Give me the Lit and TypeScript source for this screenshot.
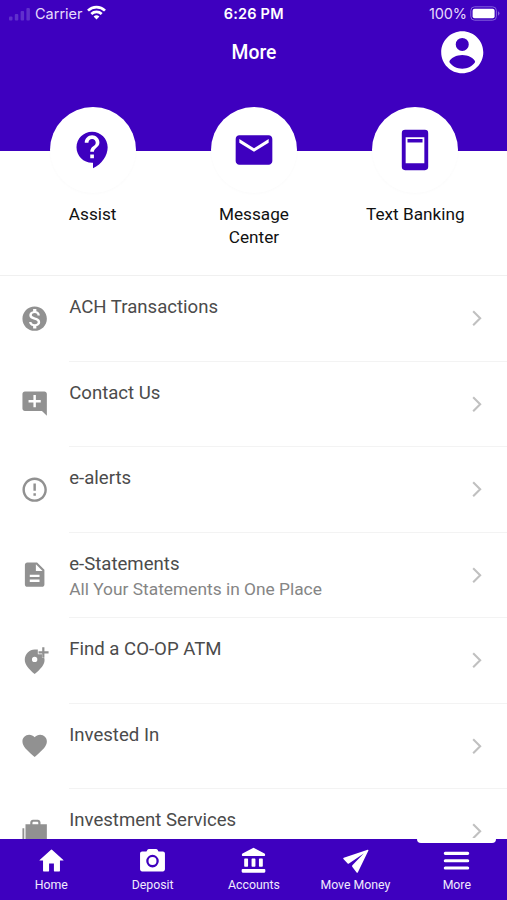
import { LitElement, html, css, svg } from "lit";
import { customElement, property } from "lit/decorators.js";

const icons: Record<string, unknown> = {
  account: svg`<path fill-rule="evenodd" d="M12 2C6.48 2 2 6.48 2 12s4.48 10 10 10 10-4.48 10-10S17.52 2 12 2zM12 5.200a3.100 3.100 0 1 1 0 6.200a3.100 3.100 0 0 1 0-6.200zM12 19.800c-2.500 0-4.900-1.250-6.150-3.200.3-2 3.700-3.350 6.150-3.350s5.850 1.350 6.150 3.350c-1.250 1.950-3.650 3.200-6.150 3.200z"/>`,
  assist: svg`<path d="M11.5 2C6.81 2 3 5.81 3 10.500S6.810 19 11.500 19h.5v3c4.860-2.340 8-7 8-11.500C20 5.810 16.190 2 11.500 2zm1 14.500h-2v-2h2v2zm0-3.500h-2c0-3.250 3-3 3-5 0-1.100-.9-2-2-2s-2 .9-2 2h-2c0-2.210 1.790-4 4-4s4 1.790 4 4c0 2.500-3 2.750-3 5z"/>`,
  mail: svg`<path d="M20 4H4c-1.100 0-1.990.9-1.990 2L2 18c0 1.100.9 2 2 2h16c1.100 0 2-.9 2-2V6c0-1.100-.9-2-2-2zm0 4l-8 5-8-5V6l8 5 8-5v2z"/>`,
  phone: svg`<path fill-rule="evenodd" d="M6.600 1h10.800a1.800 1.800 0 0 1 1.800 1.800v18.400a1.800 1.800 0 0 1-1.800 1.800H6.600a1.800 1.800 0 0 1-1.800-1.800V2.800A1.800 1.800 0 0 1 6.600 1zM6.900 5v14.200h10.200V5z"/><path d="M7.900 6h8.200v1.900H7.900z"/>`,
  money: svg`<path d="M12 2C6.480 2 2 6.480 2 12s4.480 10 10 10 10-4.480 10-10S17.520 2 12 2zm1.410 16.090V20h-2.670v-1.930c-1.710-.36-3.160-1.460-3.270-3.400h1.960c.1 1.050.82 1.870 2.650 1.870 1.960 0 2.400-.98 2.400-1.590 0-.83-.44-1.610-2.670-2.140-2.480-.6-4.180-1.620-4.180-3.670 0-1.720 1.390-2.840 3.110-3.210V4h2.670v1.950c1.860.45 2.790 1.860 2.850 3.390H14.300c-.05-1.110-.64-1.870-2.220-1.870-1.500 0-2.400.68-2.400 1.640 0 .84.65 1.390 2.670 1.910s4.180 1.390 4.180 3.910c-.01 1.830-1.380 2.830-3.120 3.160z"/>`,
  contact: svg`<path d="M22 4c0-1.100-.9-2-2-2H4c-1.100 0-2 .9-2 2v12c0 1.100.9 2 2 2h14l4 4V4zm-5 7h-4v4h-2v-4H7V9h4V5h2v4h4v2z"/>`,
  alert: svg`<path d="M11 15h2v2h-2zm0-8h2v6h-2zm.99-5C6.470 2 2 6.480 2 12s4.470 10 9.990 10C17.520 22 22 17.520 22 12S17.520 2 11.990 2zM12 20c-4.420 0-8-3.580-8-8s3.580-8 8-8 8 3.580 8 8-3.580 8-8 8z"/>`,
  doc: svg`<path d="M14 2H6c-1.100 0-1.990.9-1.990 2L4 20c0 1.100.89 2 1.990 2H18c1.100 0 2-.9 2-2V8l-6-6zm2 16H8v-2h8v2zm0-4H8v-2h8v2zm-3-5V3.500L18.500 9H13z"/>`,
  pin: svg`<path fill-rule="evenodd" d="M14.600 2.800V6.800h3.400v3h1.900q.3 1 .2 2C20.100 15 17 18.800 12 23 7 18.800 3.900 15 3.900 11.300 3.900 6.300 7.800 2.800 12 2.800zM12 8.800a2.200 2.200 0 1 0 0 4.400a2.200 2.200 0 0 0 0-4.400z"/><path d="M18.200 1h1.800v3.400h3.400v1.800H20v3.400h-1.800V6.200h-3V4.400h3z"/>`,
  heart: svg`<path d="M12 21.350l-1.450-1.320C5.400 15.360 2 12.280 2 8.500 2 5.420 4.420 3 7.500 3c1.740 0 3.410.81 4.500 2.090C13.090 3.810 14.760 3 16.500 3 19.580 3 22 5.420 22 8.500c0 3.780-3.400 6.860-8.550 11.540L12 21.350z"/>`,
  bag: svg`<path fill-rule="evenodd" d="M2 9.200h1.500V22h15v1.500H2zM8.400 6V4.500C8.400 3.300 9.400 2.200 10.600 2.200h4c1.200 0 2.200 1.100 2.200 2.300V6H22v14.500H4.500V6zM10.200 6h4.800V4.500l-.6-.6h-3.600l-.6.6z"/>`,
  home: svg`<path d="M10 20.500v-6h4v6q0 .5.5.5H18.500q.5 0 .5-.5V12h2.600q.7 0 .2-.5L12.400 3q-.4-.35-.8 0L2.200 11.500q-.5.5.2.5H5v8.500q0 .5.5.5h4q.5 0 .5-.5z"/>`,
  camera: svg`<path fill-rule="evenodd" d="M9 2.400q-.6 0-1 .5L7 4.500H3.400c-.9 0-1.700.8-1.700 1.700v13.100c0 .9.800 1.700 1.700 1.700h17.200c.9 0 1.700-.8 1.700-1.700V6.200c0-.9-.8-1.700-1.700-1.700H17l-1-1.600q-.4-.5-1-.5zM12 7.300a5.200 5.200 0 1 1 0 10.400a5.200 5.200 0 0 1 0-10.400z"/><circle cx="12" cy="12.500" r="3.300"/>`,
  bank: svg`<path d="M12.400 1.600l8.700 4.600q.5.300.5.900v.6q0 .6-.6.600H3q-.6 0-.6-.6v-.6q0-.6.5-.9l8.700-4.600q.4-.2.800 0zM4.900 10.400h2q.6 0 .6.600v5.500q0 .6-.6.600h-2q-.6 0-.6-.6V11q0-.6.600-.6zM11 10.400h2q.6 0 .6.600v5.500q0 .6-.6.600h-2q-.6 0-.6-.6V11q0-.6.600-.6zM17.100 10.400h2q.6 0 .6.600v5.500q0 .6-.6.600h-2q-.6 0-.6-.6V11q0-.6.6-.6zM3.100 19h17.800q.9 0 .9.900v1.300q0 .9-.9.900H3.100q-.9 0-.9-.9v-1.300q0-.9.900-.9z"/>`,
  send: svg`<path d="M22.100 3.100L2.300 9.700q-.8.400-.3 1.100l3.500 3.700q.5.400 1.100 0L18.800 6.200 9.400 16q-.5.600-.1 1.200l3.600 4.700q.7.600 1.100-.2L22.700 3.700q.1-.7-.6-.6z"/>`,
  menu: svg`<g stroke="currentColor" stroke-width="2.500" stroke-linecap="round"><path d="M2.700 6.100h18.600M2.700 12.200h18.600M2.700 18.200h18.600"/></g>`,
  chevron: svg`<path fill="none" stroke="currentColor" stroke-width="2.500" d="M7.400 3.800l8.400 8.400-8.400 8.400"/>`,
};

@customElement("ui-icon")
class UiIcon extends LitElement {
  @property() name = "";
  static styles = css`
    :host { display: block; flex: none; }
    .glyph { display: block; width: 100%; height: 100%; fill: currentColor; overflow: visible; }
  `;
  render() {
    return html`<svg class="glyph" viewBox="0 0 24 24">${icons[this.name]}</svg>`;
  }
}

const shortcuts = [
  { icon: "assist", label: "Assist" },
  { icon: "mail", label: "Message Center" },
  { icon: "phone", label: "Text Banking" },
];
const rows = [
  { icon: "money", title: "ACH Transactions" },
  { icon: "contact", title: "Contact Us" },
  { icon: "alert", title: "e-alerts" },
  { icon: "doc", title: "e-Statements", note: "All Your Statements in One Place" },
  { icon: "pin", title: "Find a CO-OP ATM" },
  { icon: "heart", title: "Invested In" },
  { icon: "bag", title: "Investment Services" },
];
const tabs = [
  { icon: "home", label: "Home" },
  { icon: "camera", label: "Deposit" },
  { icon: "bank", label: "Accounts" },
  { icon: "send", label: "Move Money" },
  { icon: "menu", label: "More" },
];

@customElement("app-root")
class AppRoot extends LitElement {
  static styles = css`
    :host {
      display: flex; flex-direction: column; height: 900px; overflow: hidden;
      background: #fff; font-family: Roboto, sans-serif; color: #111;
    }
    .header { flex: none; height: 151px; background: #3e00bf; color: #fff; }
    .status {
      display: grid; grid-template-columns: 1fr auto 1fr; align-items: center;
      height: 27px; padding: 0 7px 0 9px; box-sizing: border-box;
      font: 14.5px/27px Inter, sans-serif;
    }
    .carrier, .power { display: flex; align-items: center; color: #e6dafb; }
    .power { justify-content: flex-end; gap: 3px; letter-spacing: -0.1px; }
    .signal { width: 21px; height: 14px; margin-right: 5px; fill: #6030cc; }
    .wifi { width: 19px; height: 15px; margin: 0 0 2px 4.500px; fill: none; stroke: #fff; stroke-width: 2.7; }
    .clock { font-weight: 600; letter-spacing: 0.2px; margin-right: 1.500px; }
    .battery { width: 30px; height: 15px; }
    .bar { display: grid; grid-template-columns: 1fr auto 1fr; align-items: center; height: 50px; padding-right: 20px; }
    .heading { grid-column: 2; margin: 1px 0 0 21px; font-size: 19.300px; font-weight: 500; }
    .avatar { justify-self: end; width: 50.500px; height: 50.500px; }
    .shortcuts {
      flex: none; height: 169px; margin-top: -44px; padding: 0 11px 0 12px; box-sizing: border-box;
      display: grid; grid-template-columns: repeat(3, 1fr); border-bottom: 1px solid #f0f0f0;
    }
    .shortcut { display: flex; flex-direction: column; align-items: center; gap: 10px; }
    .disc {
      width: 86px; height: 86px; border-radius: 50%; background: #fff; color: #3e00bf;
      display: flex; align-items: center; justify-content: center; box-shadow: 0 1px 3px rgba(0,0,0,.02);
    }
    .disc-icon { width: 44px; height: 44px; }
    .caption { width: 110px; text-align: center; font-size: 17.200px; line-height: 22.500px; }
    .list { flex: 1; min-height: 0; overflow: hidden; }
    .row { display: flex; height: 85.500px; padding-left: 20.400px; color: #919191; }
    .row-icon { width: 29.300px; height: 29.300px; align-self: center; margin-bottom: 1px; }
    .body {
      flex: 1; display: flex; align-items: flex-start; margin-left: 19.500px;
      border-bottom: 1px solid #f3f3f3; box-sizing: border-box;
    }
    .text { flex: 1; padding-top: 19px; }
    .title { font-size: 18.600px; line-height: 24px; color: #4b4b4b; }
    .note { font-size: 17.350px; line-height: 26px; margin-top: 0.500px; color: #858585; }
    .chevron { width: 20px; height: 20px; align-self: center; margin-right: 20px; color: #c0c0c0; }
    .tabs {
      position: relative; flex: none; height: 61px; background: #3e00bf; color: #fff;
      display: grid; grid-template-columns: repeat(5, 1fr);
    }
    .tab { display: flex; flex-direction: column; align-items: center; padding: 7px 0 0 1px; gap: 2px; }
    .tab-icon { width: 29px; height: 29px; }
    .tab-label { font-size: 12.300px; line-height: 16px; white-space: nowrap; color: #f1eafd; }
    .marker {
      position: absolute; top: -1px; right: 11px; width: 79px; height: 5px;
      background: #fff; border-radius: 0 0 4px 4px;
    }
  `;
  render() {
    return html`
      <div class="header">
        <div class="status">
          <div class="carrier">
            <svg class="signal" viewBox="0 0 21 14"><rect y="9.500" width="3.500" height="4" rx="1"/><rect x="5.800" y="7" width="3.500" height="6.500" rx="1"/><rect x="11.600" y="4" width="3.500" height="9.500" rx="1"/><rect x="17.400" y="1" width="3.500" height="12.500" rx="1"/></svg>
            <span>Carrier</span>
            <svg class="wifi" viewBox="0 0 19 15"><path d="M1 5.600a12.200 12.200 0 0 1 17 0M4.300 9a7.500 7.500 0 0 1 10.400 0"/><path fill="#fff" stroke="none" d="M6.600 11.600a4.200 4.200 0 0 1 5.800 0L9.500 14.600z"/></svg>
          </div>
          <div class="clock">6:26 PM</div>
          <div class="power">
            <span>100%</span>
            <svg class="battery" viewBox="0 0 30 15"><rect x=".8" y=".8" width="25.600" height="13.400" rx="3.800" fill="none" stroke="#8460dc"/><rect x="2.600" y="2.800" width="22" height="9.400" rx="2" fill="#fff"/><path d="M28 5.300q3 2.200 0 4.400z" fill="#8460dc"/></svg>
          </div>
        </div>
        <div class="bar">
          <div class="heading">More</div>
          <ui-icon class="avatar" name="account"></ui-icon>
        </div>
      </div>
      <div class="shortcuts">
        ${shortcuts.map((s) => html`<div class="shortcut">
          <div class="disc"><ui-icon class="disc-icon" name=${s.icon}></ui-icon></div>
          <div class="caption">${s.label}</div>
        </div>`)}
      </div>
      <div class="list">
        ${rows.map((r) => html`<div class="row">
          <ui-icon class="row-icon" name=${r.icon}></ui-icon>
          <div class="body">
            <div class="text">
              <div class="title">${r.title}</div>
              ${r.note ? html`<div class="note">${r.note}</div>` : ""}
            </div>
            <ui-icon class="chevron" name="chevron"></ui-icon>
          </div>
        </div>`)}
      </div>
      <div class="tabs">
        ${tabs.map((t) => html`<div class="tab">
          <ui-icon class="tab-icon" name=${t.icon}></ui-icon>
          <div class="tab-label">${t.label}</div>
        </div>`)}
        <div class="marker"></div>
      </div>
    `;
  }
}
